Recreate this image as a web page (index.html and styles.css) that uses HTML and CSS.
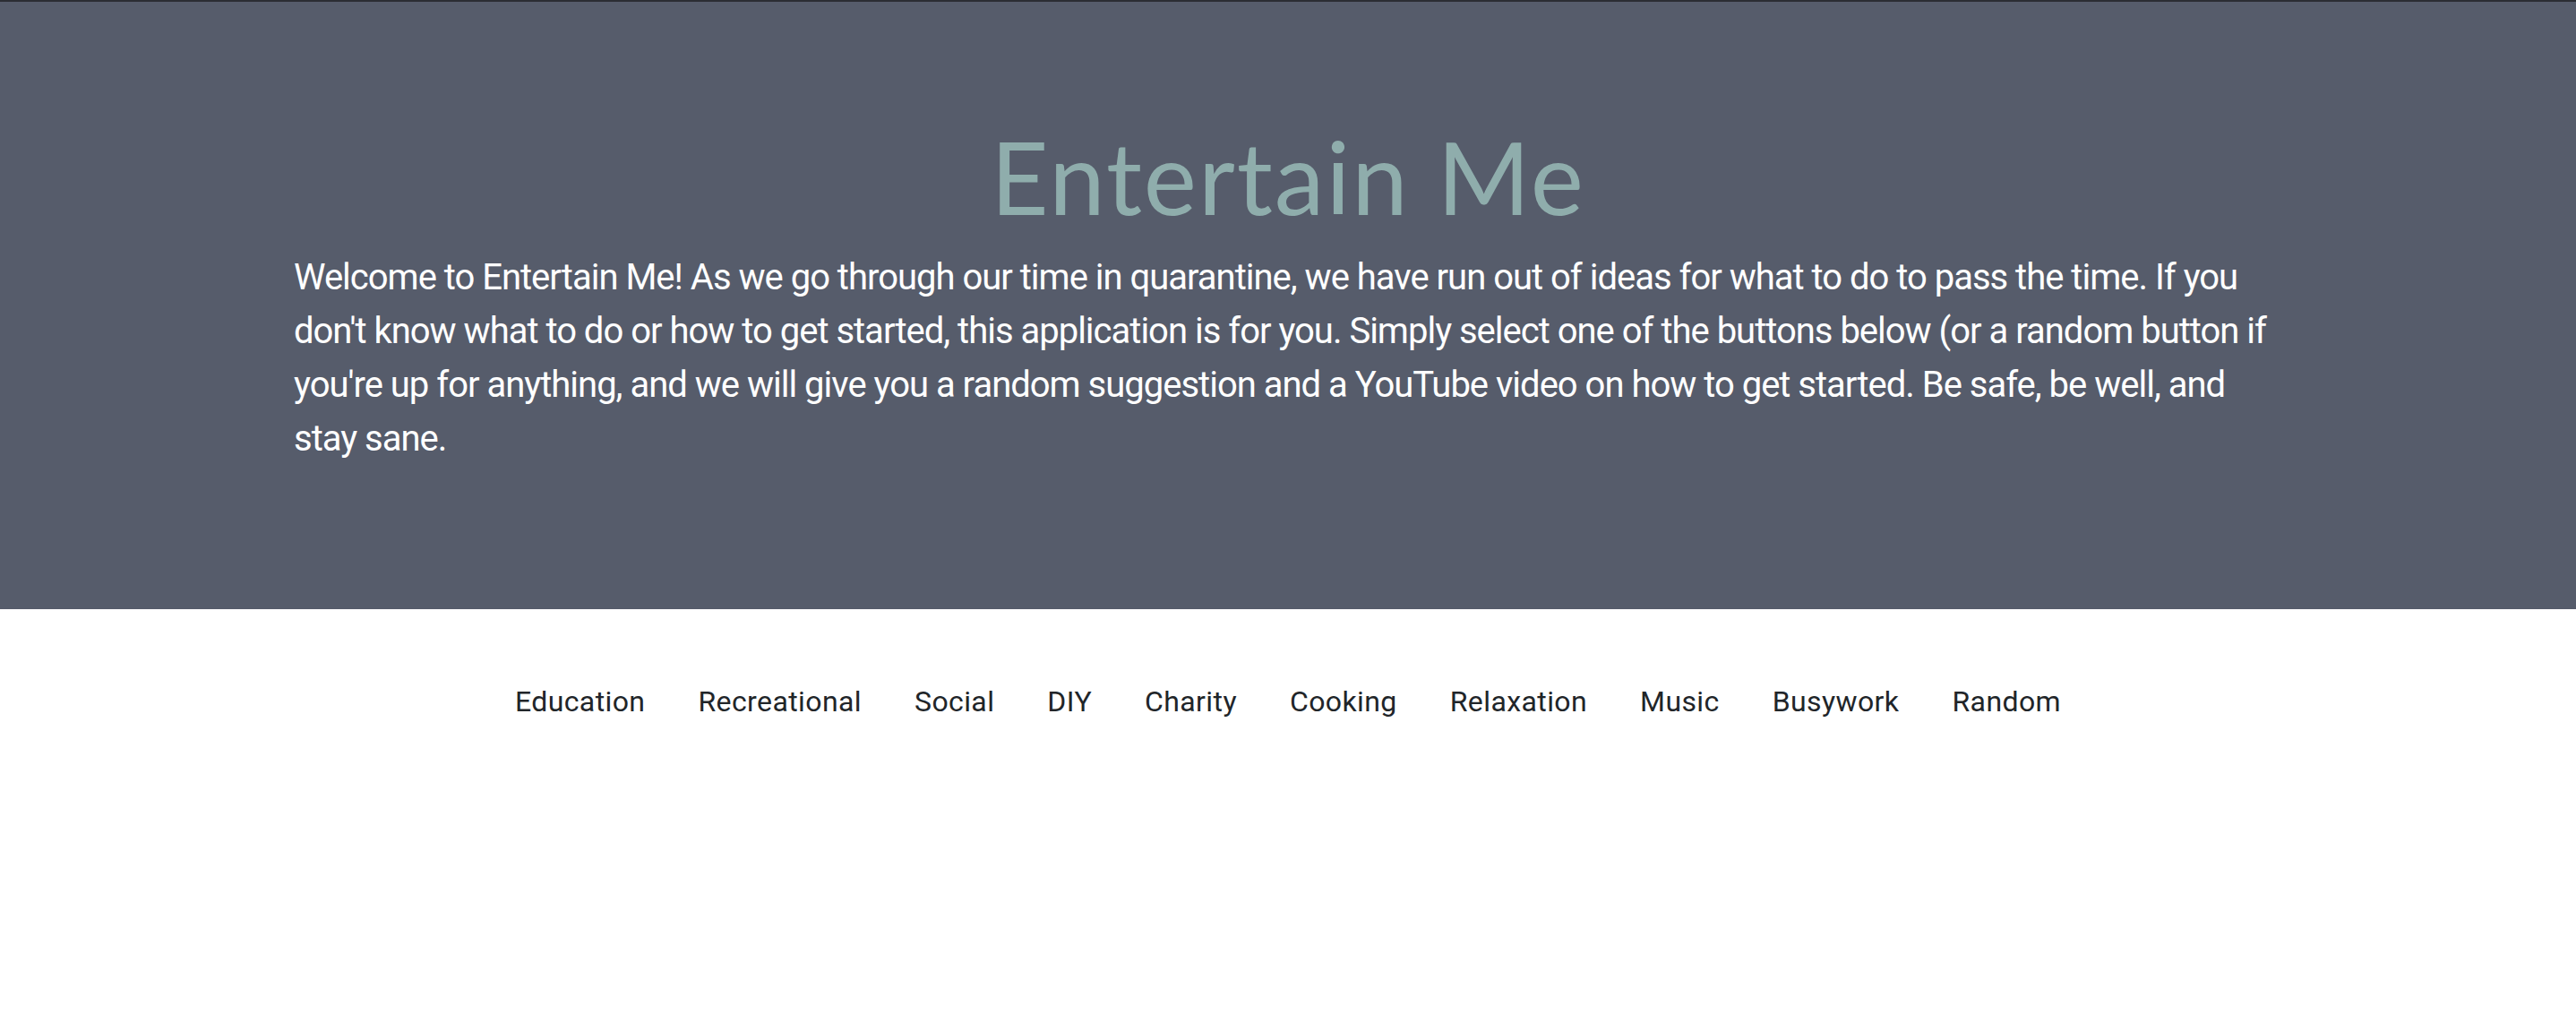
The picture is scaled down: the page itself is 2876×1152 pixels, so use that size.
FILE: index.html
```html
<!DOCTYPE html>
<html lang="en">
<head>
<meta charset="utf-8">
<title>Entertain Me</title>
<link rel="stylesheet" href="styles.css">
</head>
<body>
<header class="hero">
  <div class="container">
    <h1 class="title">Entertain Me</h1>
    <p class="lead">Welcome to Entertain Me! As we go through our time in quarantine, we have run out of ideas for what to do to pass the time. If you don't know what to do or how to get started, this application is for you. Simply select one of the buttons below (or a random button if you're up for anything, and we will give you a random suggestion and a YouTube video on how to get started. Be safe, be well, and stay sane.</p>
  </div>
</header>
<nav class="buttons">
  <button class="btn">Education</button>
  <button class="btn">Recreational</button>
  <button class="btn">Social</button>
  <button class="btn">DIY</button>
  <button class="btn">Charity</button>
  <button class="btn">Cooking</button>
  <button class="btn">Relaxation</button>
  <button class="btn">Music</button>
  <button class="btn">Busywork</button>
  <button class="btn">Random</button>
</nav>
</body>
</html>
```
FILE: styles.css
```css
html, body {
  margin: 0;
  padding: 0;
  background: #ffffff;
}
body {
  font-family: Roboto, "Liberation Sans", sans-serif;
  color: #212529;
}
.hero {
  background: #565c6b;
  border-top: 2px solid #2b2d33;
  padding: 128px 0;
}
.container {
  width: 2220px;
  margin: 0 auto;
}
.title {
  margin: 0 0 16px;
  font-family: Lato, sans-serif;
  font-weight: 400;
  font-size: 112px;
  line-height: 134px;
  letter-spacing: 2px;
  text-align: center;
  color: #8fadac;
}
.lead {
  margin: 0 0 32px;
  font-size: 40px;
  line-height: 60px;
  font-weight: 400;
  color: #ffffff;
  letter-spacing: -1px;
}
.buttons {
  display: flex;
  justify-content: center;
  gap: 9px;
  margin-top: 66px;
}
.btn {
  font-family: Roboto, "Liberation Sans", sans-serif;
  font-size: 32px;
  line-height: 48px;
  padding: 12px 24px;
  border: 1px solid transparent;
  background: transparent;
  color: #212529;
  letter-spacing: 0.4px;
}
```
